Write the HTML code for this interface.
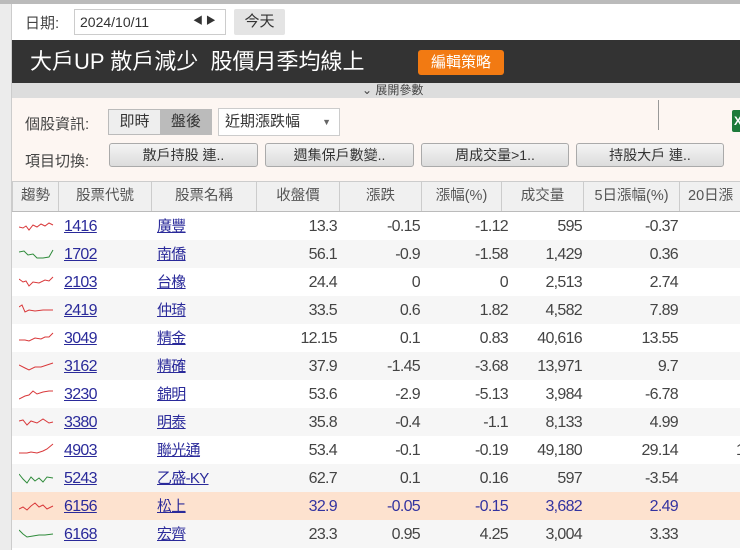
<!DOCTYPE html>
<html><head><meta charset="utf-8"><style>
*{margin:0;padding:0;box-sizing:border-box}
body{width:740px;height:550px;overflow:hidden;background:#fff;font-family:"Liberation Sans","Noto Sans CJK TC",sans-serif;color:#333;position:relative}
.a{position:absolute}
.btn{position:absolute;height:24px;border:1px solid #aaa;border-radius:3px;background:linear-gradient(#f4f4f4,#dcdcdc);font-size:14px;text-align:center;line-height:22px;color:#333}
.hd{position:absolute;top:182px;height:30px;border-right:1px solid #ccc;font-size:14.5px;line-height:28px;text-align:center;color:#555;background:#f0f0f0}
.row{position:absolute;left:12px;width:728px;height:28px;font-size:16px;line-height:30px;letter-spacing:-0.7px;color:#444}
.row span{position:absolute;top:0}
.n{text-align:right}
.row a{color:#2a2a9a;text-decoration:underline}
</style></head><body>
<div class="a" style="left:0;top:0;width:740px;height:4px;background:#bbb"></div>
<div class="a" style="left:0;top:4px;width:12px;height:546px;background:#ececec;border-right:1px solid #ccc"></div>
<div class="a" style="left:25px;top:12px;font-size:15px;color:#444">日期:</div>
<div class="a" style="left:74px;top:9px;width:152px;height:26px;border:1px solid #ccc;background:#fff;font-size:14px;line-height:24px;padding-left:5px">2024/10/11<span style="position:absolute;left:118px;font-size:10px">◀ ▶</span></div>
<div class="a" style="left:234px;top:9px;width:51px;height:26px;background:#e4e4e4;border-radius:2px;font-size:15px;line-height:26px;text-align:center">今天</div>
<div class="a" style="left:12px;top:40px;width:728px;height:43px;background:#333"></div>
<div class="a" style="left:30px;top:47px;font-size:22px;color:#fff;line-height:30px">大戶UP 散戶減少&nbsp; 股價月季均線上</div>
<div class="a" style="left:418px;top:50px;width:86px;height:25px;background:#f27a12;border-radius:3px;color:#fff;font-size:15px;line-height:25px;text-align:center">編輯策略</div>
<div class="a" style="left:12px;top:83px;width:728px;height:15px;background:#ddd;font-size:12px;line-height:15px;color:#444;padding-left:350px">⌄ 展開參數</div>
<div class="a" style="left:12px;top:98px;width:728px;height:84px;background:#fdf6f2"></div>
<div class="a" style="left:25px;top:113px;font-size:15px;color:#444">個股資訊:</div>
<div class="a" style="left:108px;top:109px;width:104px;height:26px;border:1px solid #bbb;background:#eee;font-size:15px;line-height:24px"><span style="position:absolute;left:0;width:51px;text-align:center">即時</span><span style="position:absolute;left:51px;width:52px;height:24px;background:#bbb;text-align:center">盤後</span></div>
<div class="a" style="left:218px;top:108px;width:122px;height:28px;border:1px solid #ccc;background:#fff;font-size:15px;line-height:26px;padding-left:6px">近期漲跌幅<span style="position:absolute;right:8px;font-size:9px;color:#666">▼</span></div>
<div class="a" style="left:658px;top:100px;width:1px;height:30px;background:#999"></div>
<div class="a" style="left:732px;top:110px;width:10px;height:22px;background:#1d7a3a;border-radius:2px;color:#fff;font-size:12px;font-weight:bold;line-height:22px;padding-left:2px">X</div>
<div class="a" style="left:25px;top:150px;font-size:15px;color:#444">項目切換:</div>
<div class="btn" style="left:109px;top:143px;width:149px">散戶持股 連..</div>
<div class="btn" style="left:265px;top:143px;width:149px">週集保戶數變..</div>
<div class="btn" style="left:421px;top:143px;width:148px">周成交量&gt;1..</div>
<div class="btn" style="left:576px;top:143px;width:148px">持股大戶 連..</div>
<div class="a" style="left:12px;top:181px;width:728px;height:1px;background:#ccc"></div>
<div class="hd" style="left:12px;width:47px;border-left:1px solid #ccc">趨勢</div>
<div class="hd" style="left:59px;width:93px">股票代號</div>
<div class="hd" style="left:152px;width:105px">股票名稱</div>
<div class="hd" style="left:257px;width:83px">收盤價</div>
<div class="hd" style="left:340px;width:82px">漲跌</div>
<div class="hd" style="left:422px;width:80px">漲幅(%)</div>
<div class="hd" style="left:502px;width:82px">成交量</div>
<div class="hd" style="left:584px;width:96px">5日漲幅(%)</div>
<div class="hd" style="left:680px;width:80px;text-align:left;padding-left:8px">20日漲</div>
<div class="a" style="left:12px;top:211px;width:728px;height:1px;background:#bbb"></div>
<div id="rows"></div>
<script>
var d=[["1416","廣豐","13.3","-0.15","-1.12","595","-0.37","r","",0],
["1702","南僑","56.1","-0.9","-1.58","1,429","0.36","g","",0],
["2103","台橡","24.4","0","0","2,513","2.74","r","",0],
["2419","仲琦","33.5","0.6","1.82","4,582","7.89","r","",0],
["3049","精金","12.15","0.1","0.83","40,616","13.55","r","",0],
["3162","精確","37.9","-1.45","-3.68","13,971","9.7","r","",0],
["3230","錦明","53.6","-2.9","-5.13","3,984","-6.78","r","",0],
["3380","明泰","35.8","-0.4","-1.1","8,133","4.99","r","",0],
["4903","聯光通","53.4","-0.1","-0.19","49,180","29.14","r","1",0],
["5243","乙盛-KY","62.7","0.1","0.16","597","-3.54","g","",0],
["6156","松上","32.9","-0.05","-0.15","3,682","2.49","r","",1],
["6168","宏齊","23.3","0.95","4.25","3,004","3.33","g","",0]];
var sp=["M0 8 L4 9 L7 7 L10 11 L14 6 L18 8 L22 5 L26 7 L30 4 L34 6","M0 5 L5 4 L9 8 L14 7 L18 11 L24 11 L30 10 L34 3","M0 4 L4 7 L7 6 L10 11 L14 7 L20 8 L26 5 L30 6 L34 2","M0 4 L3 2 L6 9 L10 7 L16 8 L24 7 L34 7","M0 9 L6 9 L10 10 L16 7 L22 8 L26 6 L30 6 L34 2","M0 6 L6 9 L10 11 L16 8 L22 8 L28 6 L34 4","M0 12 L6 9 L10 8 L14 4 L18 7 L24 5 L30 4 L34 4","M0 6 L4 5 L8 10 L12 6 L18 8 L24 4 L30 8 L34 7","M0 10 L8 10 L12 9 L18 10 L24 8 L28 6 L34 1","M0 3 L4 8 L8 12 L12 6 L16 10 L20 7 L24 11 L28 6 L34 7","M0 10 L4 8 L8 11 L12 7 L16 4 L20 8 L24 6 L28 10 L34 7","M0 3 L4 7 L8 10 L14 9 L20 8 L26 8 L34 7"];
var h="";
d.forEach(function(r,i){var t=212+28*i;var bg=r[9]?"#fde2cf":(i%2?"#f6f6f6":"#fff");var c=r[9]?"color:#3333a0;":"";
var sc=r[7]=="g"?"#2e8b3a":"#d9383a";
h+='<div class="row" style="top:'+t+'px;background:'+bg+';'+c+'">'+
'<svg style="position:absolute;left:7px;top:7px" width="36" height="14"><path d="'+sp[i]+'" fill="none" stroke="'+sc+'" stroke-width="1"/></svg>'+
'<span style="left:52px"><a>'+r[0]+'</a></span><span style="left:145px;font-size:15px"><a>'+r[1]+'</a></span>'+
'<span class="n" style="left:245px;width:80px">'+r[2]+'</span>'+
'<span class="n" style="left:328px;width:80px">'+r[3]+'</span>'+
'<span class="n" style="left:410px;width:86px">'+r[4]+'</span>'+
'<span class="n" style="left:490px;width:80px">'+r[5]+'</span>'+
'<span class="n" style="left:570px;width:96px">'+r[6]+'</span>'+
'<span style="left:724px">'+r[8]+'</span></div>';});
document.getElementById("rows").innerHTML=h;
</script>
</body></html>
